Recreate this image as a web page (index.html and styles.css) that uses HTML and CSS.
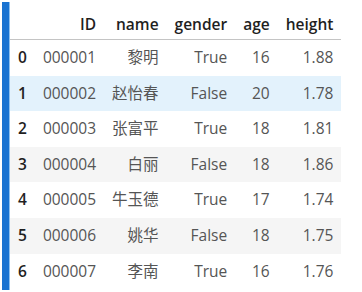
FILE: index.html
```html
<!DOCTYPE html>
<html>
<head>
<meta charset="utf-8">
<link rel="stylesheet" href="styles.css">
</head>
<body>
<div class="cell">
  <table class="dataframe">
    <thead>
      <tr><th class="idx"></th><th>ID</th><th>name</th><th>gender</th><th>age</th><th>height</th></tr>
    </thead>
    <tbody>
      <tr><th class="idx">0</th><td>000001</td><td>黎明</td><td>True</td><td>16</td><td>1.88</td></tr>
      <tr class="hover"><th class="idx">1</th><td>000002</td><td>赵怡春</td><td>False</td><td>20</td><td>1.78</td></tr>
      <tr><th class="idx">2</th><td>000003</td><td>张富平</td><td>True</td><td>18</td><td>1.81</td></tr>
      <tr class="stripe"><th class="idx">3</th><td>000004</td><td>白丽</td><td>False</td><td>18</td><td>1.86</td></tr>
      <tr><th class="idx">4</th><td>000005</td><td>牛玉德</td><td>True</td><td>17</td><td>1.74</td></tr>
      <tr class="stripe"><th class="idx">5</th><td>000006</td><td>姚华</td><td>False</td><td>18</td><td>1.75</td></tr>
      <tr><th class="idx">6</th><td>000007</td><td>李南</td><td>True</td><td>16</td><td>1.76</td></tr>
    </tbody>
  </table>
</div>
</body>
</html>
```
FILE: styles.css
```css
html, body {
  margin: 0;
  padding: 0;
  background: #ffffff;
}
body {
  font-family: "Open Sans", "Noto Sans CJK SC", sans-serif;
  font-size: 15.5px;
}
.cell {
  margin: 2px 0 0 2px;
  height: 288px;
  border-left: 7px solid #1a73d1;
  box-shadow: inset 1px 0 0 #8fc0ee;
  padding-left: 1px;
  box-sizing: border-box;
}
.dataframe {
  border-collapse: collapse;
  border-spacing: 0;
  color: #555555;
}
.dataframe th, .dataframe td {
  padding: 8px 8px;
  line-height: 19.6px;
  text-align: right;
  white-space: nowrap;
  font-weight: normal;
}
.dataframe thead th {
  font-weight: 600;
  color: #1f1f1f;
  padding: 12px 8px 5px;
  line-height: 20px;
  border-bottom: 1px solid #c4c4c4;
}
.dataframe tbody th.idx {
  font-weight: 600;
  color: #1f1f1f;
  text-align: left;
}
.dataframe tr.stripe {
  background: #f5f5f5;
}
.dataframe tr.hover {
  background: #e3f2fc;
}
```
